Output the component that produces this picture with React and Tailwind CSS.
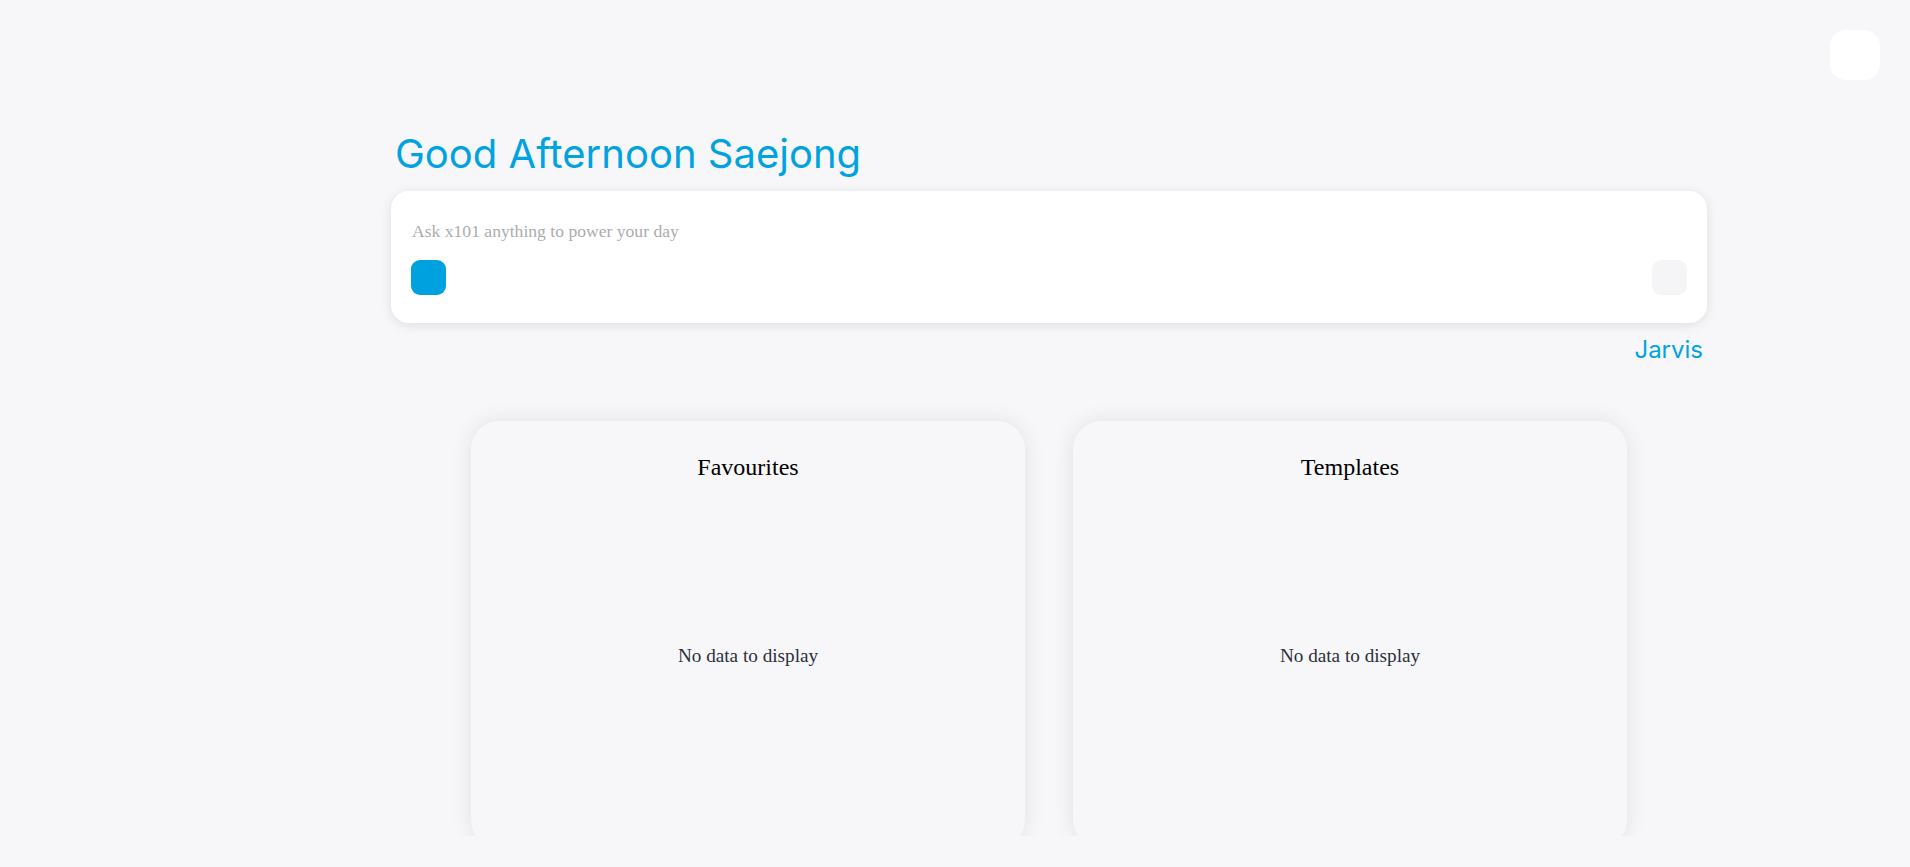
export default function App() {
  return (
    <div className="h-[867px] w-full overflow-hidden bg-[#f7f7f9] flex">
      <aside className="w-[188px] shrink-0" />
      <div className="flex-1 flex flex-col">
        <div className="flex justify-end pt-[30px] pr-[30px]">
          <button className="w-[50px] h-[50px] rounded-[16px] bg-white" aria-label="menu" />
        </div>

        <div className="w-[1316px] mx-auto mt-[50px]">
          <h1 className="pl-[4px] text-[40px] leading-[48px] text-[#00a3e0] font-normal" style={{ fontFamily: "Inter, sans-serif" }}>
            Good Afternoon Saejong
          </h1>
          <div className="mt-[13px] bg-white rounded-[18px] shadow-[0_2px_12px_rgba(0,0,0,0.10)] pt-[28px] pb-[28px] px-[20px]">
            <textarea
              rows={1}
              placeholder="Ask x101 anything to power your day"
              className="block w-full resize-none outline-none bg-transparent h-[24px] pl-[1px] text-[17.6px] leading-[24px] text-[#333] placeholder:text-[#acacaf] overflow-hidden"
              style={{ fontFamily: '"Liberation Serif", "Times New Roman", serif' }}
            />
            <div className="mt-[17px] flex items-center justify-between">
              <button className="w-[35px] h-[35px] rounded-[9px] bg-[#00a1df]" aria-label="action" />
              <button className="w-[35px] h-[35px] rounded-[9px] bg-[#f5f5f7]" aria-label="send" />
            </div>
          </div>
          <div className="flex justify-end pr-[4px] mt-[9px]">
            <span className="text-[24px] leading-[36px] text-[#00a3e0]" style={{ fontFamily: "Inter, sans-serif" }}>
              Jarvis
            </span>
          </div>
        </div>

        <div className="mt-[33px] h-[435px] pt-[20px] overflow-hidden">
          <div className="flex justify-center gap-[48px]">
            {["Favourites", "Templates"].map((t) => (
              <div
                key={t}
                className="w-[554px] h-[427px] rounded-[28px] bg-[#f7f7f9] shadow-[0_0_22px_rgba(0,0,0,0.09)] flex flex-col"
                style={{ fontFamily: '"Liberation Serif", "Times New Roman", serif' }}
              >
                <div className="pt-[32px] text-center text-[24px] leading-[28px] text-black">{t}</div>
                <div className="flex-1 flex items-center justify-center pb-[18px]">
                  <span className="text-[19.2px] leading-[22px] text-[#2b2f3a]">No data to display</span>
                </div>
              </div>
            ))}
          </div>
        </div>
      </div>
    </div>
  );
}
